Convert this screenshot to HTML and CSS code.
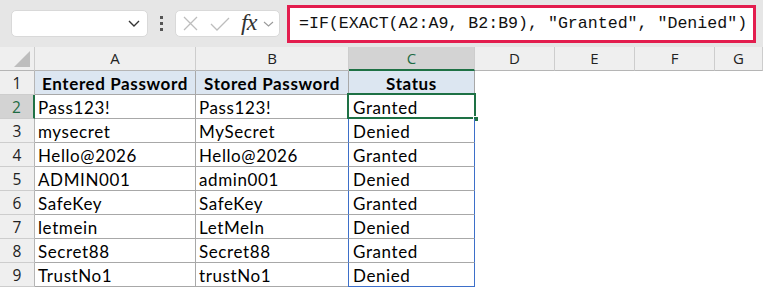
FILE: index.html
```html
<!DOCTYPE html>
<html lang="en">
  <head>
    <meta charset="UTF-8" />
    <title>Password Check</title>
    <link rel="stylesheet" href="styles.css">
  </head>
  <body>
    <div class="toolbar">
      <div class="name-box">
        <svg class="chevron" width="12" height="7" viewBox="0 0 12 7">
          <polyline points="1,1 6,6 11,1" fill="none" stroke="#333" stroke-width="1.4" />
        </svg>
      </div>
      <div class="grip"><span></span><span></span><span></span></div>
      <div class="fx-buttons">
        <svg width="15" height="15" viewBox="0 0 15 15">
          <path d="M1 1 L14 14 M14 1 L1 14" stroke="#bdbdbd" stroke-width="1.3" />
        </svg>
        <svg width="20" height="14" viewBox="0 0 20 14">
          <polyline points="1,7 7,13 19,1" fill="none" stroke="#bdbdbd" stroke-width="1.3" />
        </svg>
        <span class="fx">fx</span>
        <svg width="11" height="6" viewBox="0 0 11 6">
          <polyline points="1,1 5.5,5 10,1" fill="none" stroke="#9a9a9a" stroke-width="1.1" />
        </svg>
      </div>
      <div class="formula">=IF(EXACT(A2:A9, B2:B9), "Granted", "Denied")</div>
    </div>

    <div class="sheet">
      <div class="col-head corner"><span class="corner-tri"></span></div>
      <div class="col-head">A</div>
      <div class="col-head">B</div>
      <div class="col-head active">C</div>
      <div class="col-head">D</div>
      <div class="col-head">E</div>
      <div class="col-head">F</div>
      <div class="col-head">G</div>
    </div>

    <div class="sheet" id="rows"></div>

    <script>
      const data = [
        ["Pass123!", "Pass123!"],
        ["mysecret", "MySecret"],
        ["Hello@2026", "Hello@2026"],
        ["ADMIN001", "admin001"],
        ["SafeKey", "SafeKey"],
        ["letmein", "LetMeIn"],
        ["Secret88", "Secret88"],
        ["TrustNo1", "trustNo1"],
      ];

      const rows = document.getElementById("rows");

      function cell(cls, text) {
        const div = document.createElement("div");
        div.className = cls;
        div.textContent = text || "";
        rows.appendChild(div);
        return div;
      }

      // header row
      cell("row-head", "1");
      cell("cell head-cell", "Entered Password");
      cell("cell head-cell", "Stored Password");
      cell("cell head-cell", "Status");
      for (let i = 0; i < 4; i++) cell("blank");

      data.forEach((pair, i) => {
        const status = pair[0] === pair[1] ? "Granted" : "Denied";
        cell(i === 0 ? "row-head active" : "row-head", String(i + 2));
        cell("cell", pair[0]);
        cell("cell", pair[1]);
        const c = cell("cell status" + (i === data.length - 1 ? " last" : ""), status);
        if (i === 0) {
          const sel = document.createElement("span");
          sel.className = "selection";
          sel.innerHTML = '<span class="handle"></span>';
          c.appendChild(sel);
        }
        for (let j = 0; j < 4; j++) cell("blank");
      });
    </script>
  </body>
</html>
```

FILE: styles.css
```css
* {
  margin: 0;
  padding: 0;
  box-sizing: border-box;
}

body {
  background-color: white;
  width: 763px;
  height: 288px;
  overflow: hidden;
  font-family: "Lato", "Noto Sans", sans-serif;
}

/* Formula bar */
.toolbar {
  height: 47px;
  background-color: #e6e6e6;
  display: flex;
  align-items: center;
  padding-left: 11px;
}

.name-box {
  width: 137px;
  height: 27px;
  background-color: white;
  border: 1px solid #d9d9d9;
  border-radius: 5px;
  display: flex;
  justify-content: flex-end;
  align-items: center;
  padding-right: 7px;
}

.grip {
  width: 27px;
  display: flex;
  flex-direction: column;
  align-items: center;
  gap: 3px;
}

.grip span {
  width: 3px;
  height: 3px;
  background-color: #555;
}

.fx-buttons {
  width: 105px;
  height: 27px;
  background-color: white;
  border: 1px solid #d9d9d9;
  border-radius: 5px;
  display: flex;
  align-items: center;
  padding-left: 7px;
}

.fx-buttons svg:nth-child(2) {
  margin-left: 12px;
}

.fx {
  font-family: "Liberation Serif", serif;
  font-style: italic;
  font-size: 24px;
  line-height: 24px;
  color: #333;
  margin-left: 11px;
  margin-top: -3px;
  letter-spacing: -1px;
}

.fx-buttons svg:last-child {
  margin-left: 7px;
}

.formula {
  width: 469px;
  height: 38px;
  margin-left: 7px;
  background-color: white;
  border: 3px solid #e31d4e;
  font-family: "Liberation Mono", monospace;
  font-size: 16.6px;
  line-height: 32px;
  padding-left: 9px;
  color: #111;
  white-space: nowrap;
}

/* Grid */
.sheet {
  display: grid;
  grid-template-columns: 35px 161px 153px 126px 80px 80px 80px 1fr;
}

.col-head {
  height: 24px;
  background-color: #efefef;
  border-right: 1px solid #cdcdcd;
  border-bottom: 1px solid #b5b5b5;
  text-align: center;
  font-family: "Open Sans", sans-serif;
  font-size: 15px;
  line-height: 23px;
  color: #222;
}

.col-head.active {
  background-color: #d3d3d3;
  border-bottom: 2px solid #1e7145;
  color: #1e6b43;
}

.corner {
  position: relative;
}

.corner-tri {
  position: absolute;
  right: 4px;
  bottom: 3px;
  width: 0;
  height: 0;
  border-left: 16px solid transparent;
  border-bottom: 16px solid #bdbdbd;
}

.row-head {
  height: 24px;
  background-color: #efefef;
  border-right: 1px solid #b5b5b5;
  border-bottom: 1px solid #cdcdcd;
  text-align: center;
  font-family: "Open Sans", sans-serif;
  font-size: 15.5px;
  line-height: 24px;
  color: #222;
}

.row-head.active {
  background-color: #d3d3d3;
  border-right: 2px solid #1e7145;
  color: #1e6b43;
}

.cell {
  height: 24px;
  border-right: 1px solid #a8a8a8;
  border-bottom: 1px solid #a8a8a8;
  font-size: 17px;
  letter-spacing: 0.6px;
  line-height: 25px;
  padding-left: 3px;
  color: #000;
  white-space: nowrap;
  overflow: visible;
  position: relative;
}

.head-cell {
  background-color: #dce6f1;
  font-weight: bold;
  text-align: center;
  padding-left: 0;
}

.status {
  border-left: 1px solid #3d6fc9;
  border-right: 1px solid #3d6fc9;
  margin-left: -1px;
  padding-left: 4px;
}

.status.last {
  border-bottom: 1px solid #3d6fc9;
}

.blank {
  height: 24px;
}

.selection {
  position: absolute;
  left: -2px;
  top: -2px;
  width: 129px;
  height: 26px;
  border: 2px solid #1e7145;
}

.handle {
  position: absolute;
  right: -5px;
  bottom: -5px;
  width: 6px;
  height: 6px;
  background-color: #1e7145;
  border: 1px solid white;
}
```
